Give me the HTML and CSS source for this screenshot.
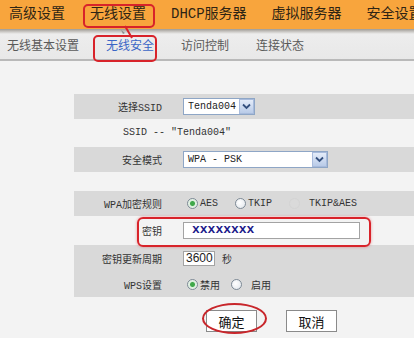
FILE: index.html
```html
<!DOCTYPE html>
<html lang="zh-CN">
<head>
  <meta charset="UTF-8"/>
  <title>无线安全</title>
  <link rel="stylesheet" href="styles.css">
</head>
<body>

  <div class="topnav">
    <a>高级设置</a>
    <a class="on">无线设置</a>
    <a>DHCP服务器</a>
    <a>虚拟服务器</a>
    <a>安全设置</a>
  </div>

  <div class="subnav">
    <a>无线基本设置</a>
    <a class="on">无线安全</a>
    <a>访问控制</a>
    <a>连接状态</a>
  </div>

  <!-- red pointer between the two marked tabs -->
  <svg class="pointer" width="22" height="18" viewBox="0 0 22 18">
    <path d="M2 7 L6 10 L4 11 Z" fill="#8c8c8c"/>
    <line x1="6" y1="3" x2="13" y2="15" stroke="#d8232a" stroke-width="2"/>
  </svg>

  <div class="form">
    <div class="row shade">
      <div class="lbl">选择SSID</div>
      <div class="val">
        <div class="sel short"><span>Tenda004</span><i class="arrow"><svg width="9" height="7" viewBox="0 0 9 7"><path d="M1 1.5 L4.5 5 L8 1.5" fill="none" stroke="#34507e" stroke-width="1.8"/></svg></i></div>
      </div>
    </div>

    <div class="row note">SSID -- "Tenda004"</div>

    <div class="row shade">
      <div class="lbl">安全模式</div>
      <div class="val">
        <div class="sel wide"><span>WPA - PSK</span><i class="arrow"><svg width="9" height="7" viewBox="0 0 9 7"><path d="M1 1.5 L4.5 5 L8 1.5" fill="none" stroke="#34507e" stroke-width="1.8"/></svg></i></div>
      </div>
    </div>

    <div class="spacer"></div>

    <div class="row shade">
      <div class="lbl">WPA加密规则</div>
      <div class="val opts">
        <label class="opt"><span class="radio checked"></span>AES</label>
        <label class="opt"><span class="radio"></span>TKIP</label>
        <label class="opt off"><span class="radio"></span>TKIP&amp;AES</label>
      </div>
    </div>

    <div class="row mark">
      <div class="lbl">密钥</div>
      <div class="val"><div class="keybox">xxxxxxxx</div></div>
    </div>

    <div class="group shade">
      <div class="row">
        <div class="lbl">密钥更新周期</div>
        <div class="val"><div class="num">3600</div><span class="unit">秒</span></div>
      </div>
      <div class="row">
        <div class="lbl">WPS设置</div>
        <div class="val opts wps">
          <label class="opt"><span class="radio checked"></span>禁用</label>
          <label class="opt"><span class="radio"></span>启用</label>
        </div>
      </div>
    </div>
  </div>

  <div class="actions">
    <button class="btn mark">确定</button>
    <button class="btn">取消</button>
  </div>

</body>
</html>
```

FILE: styles.css
```css
/* base */
* { margin:0; padding:0; box-sizing:border-box; }
html, body {
  width:100%; height:100%; overflow:hidden;
  background:#f3f3f3; color:#333;
  font-family:"Liberation Mono","Noto Sans CJK SC",monospace;
  font-size:10px;
}
body { position:relative; }

/* top menu */
.topnav {
  display:flex; gap:25px;
  height:29px; padding-left:9px;
  background:#f8a53d;
  white-space:nowrap; overflow:hidden;
}
.topnav a {
  position:relative;
  line-height:29px; font-size:14px;
  color:#2e2414;
}
.topnav a.on::after {
  content:''; position:absolute;
  top:4px; bottom:1px; left:-7px; right:-9px;
  border:2px solid #d8232a; border-radius:5px;
}

/* second menu */
.subnav {
  display:flex; gap:27px;
  height:32px; padding:6px 0 0 7px;
  background:linear-gradient(to bottom,#9e9a94 0,#cfcdca 3px,#ededed 5px,#e8e8e8 100%);
  border-bottom:2px solid #b9b9b9;
  white-space:nowrap;
}
.subnav a {
  position:relative;
  line-height:24px; font-size:12px;
  color:#5a5a5a;
}
.subnav a.on { color:#3b66c6; }
.subnav a.on::after {
  content:''; position:absolute;
  top:0; bottom:-3px; left:-13px; right:-3px;
  border:2px solid #d8232a; border-radius:5px;
  z-index:2;
}

.pointer {
  position:absolute; left:119px; top:23px;
  z-index:3;
}

/* form table */
.form {
  margin:33px 0 0 74px;
}
.row {
  position:relative;
  display:grid; grid-template-columns:96px 1fr;
  align-items:center;
  height:25px;
}
.shade { background:#d9d9d9; }
.lbl { text-align:right; padding-right:8px; }
.val { display:flex; align-items:center; padding-left:13px; }

.row.note {
  display:block; height:28px; line-height:28px;
  padding-left:49px;
}
.spacer { height:19px; }

/* select boxes */
.sel {
  display:flex; align-items:center; justify-content:space-between;
  height:17px; padding-left:4px;
  background:#fff; border:1px solid #8ea6c6;
  color:#222;
}
.sel.short { width:72px; }
.sel.wide { width:145px; }
.arrow {
  display:flex; align-items:center; justify-content:center;
  width:15px; height:15px;
  background:linear-gradient(#e4ecf9,#b9cbe8);
  border:1px solid #a8bbdc;
}

/* radios */
.opts { padding-left:17px; gap:17px; }
.opt { display:inline-flex; align-items:center; gap:2px; color:#333; }
.radio {
  width:11px; height:11px; border-radius:50%;
  border:1px solid #7d8a96;
  background:radial-gradient(circle at 40% 40%,#fff,#dfe4ea);
}
.radio.checked {
  background:radial-gradient(circle,#3fa84a 0,#3fa84a 2px,#dbeedd 3px,#f5faf5 100%);
}
.opt.off .radio { border-color:#d4d4d4; background:#dadada; }
.opt.off { gap:9px; }
.wps { gap:11px; }
.wps .opt:last-child { gap:9px; }

/* key field */
.row.mark { height:29px; }
.row.mark::after {
  content:''; position:absolute;
  left:63px; top:1px; width:230px; height:26px;
  border:2px solid #d8232a; border-radius:6px;
  box-shadow:0 0 3px rgba(216,35,42,0.45);
}
.keybox {
  width:177px; height:17px;
  padding-left:8px;
  background:#fff; border:1px solid #a3a3a3;
  font-size:13px; font-weight:700; line-height:14px;
  color:#1c1a8a;
}

.group { height:52px; }
.group .row { height:26px; }
.num {
  width:32px; height:15px;
  padding-left:2px;
  background:#fff; border:1px solid #a3a3a3;
  font-family:"Liberation Sans",sans-serif; font-size:12px; line-height:13px;
  color:#222;
}
.unit { margin-left:7px; }

/* buttons */
.actions {
  display:flex; gap:29px;
  margin:13px 0 0 206px;
}
.btn {
  position:relative;
  width:51px; height:22px;
  background:#fff; border:1px solid #8a8a8a;
  font-family:"Noto Sans CJK SC",sans-serif; font-size:13px;
  color:#111;
}
.btn.mark::after {
  content:''; position:absolute;
  top:-8px; bottom:-3px; left:-5px; right:-11px;
  border:2px solid #c8262b; border-radius:50%;
}
```
